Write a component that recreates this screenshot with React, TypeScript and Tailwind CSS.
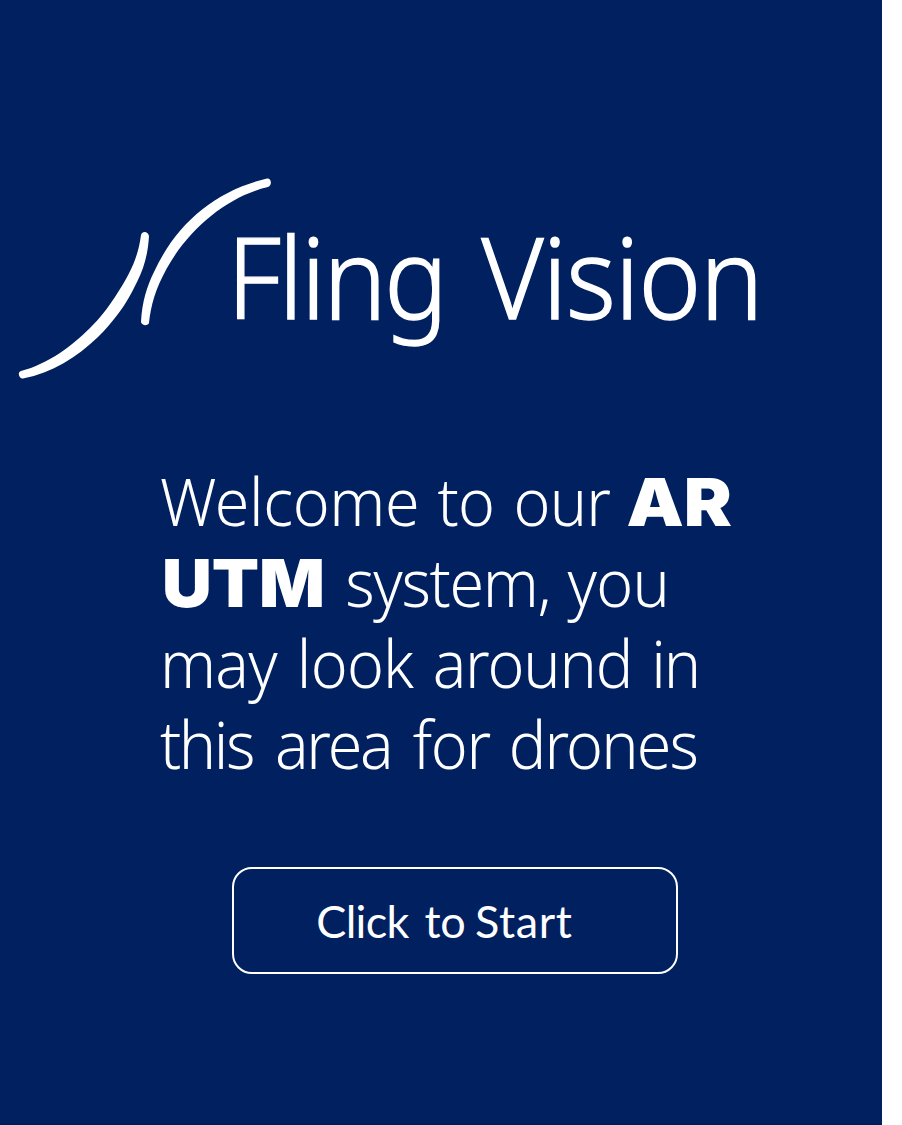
export default function App() {
  return (
    <div className="flex h-[1125px] w-[882px] flex-col border-b-2 border-[#001c5a] bg-[#002060] font-['Noto_Sans',sans-serif] text-white">
      <header className="flex h-[460px] items-start pl-[18px] pt-[176px]">
        <svg className="h-[206px] w-[256px] shrink-0" viewBox="18 176 256 206" fill="white">
          <path d="M141 235C142 231 148 231 149 236C148 254 144 268 137 282C131 294 127 302 118 314C112 322 106 329 98 337C77 357 52 373 23 378.500C19 379 17 372 21 371C48 364 72 346 90 328C100 318 107 309 115 297C130 274 138 258 141 235Z" />
          <path d="M267 178.500C272 178 272 186 268 187C229 196 190 227 167 268C155 290 151 305 149 323C148 326 142 326 141 322C142 302 147 286 154 272C177 222 217 190 267 178.500Z" />
        </svg>
        <h1 className="-ml-[47px] flex origin-left scale-x-[0.95] whitespace-nowrap pt-[20px] text-[112px] font-light leading-[160px] [-webkit-text-stroke:1.4px_white]">
          <span className="w-[268px] tracking-[-2.5px]">Fling</span>
          <span className="tracking-[-1.2px]">Vision</span>
        </h1>
      </header>
      <div className="ml-[160px] w-[640px] origin-left scale-x-[0.95] whitespace-nowrap text-[66px] font-light leading-[81px] tracking-[-0.8px]">
        <p className="flex h-[81px] items-baseline">
          <span className="w-[292px] tracking-[-0.4px]">Welcome</span>
          <span className="w-[80px]">to</span>
          <span className="w-[119px]">our</span>
          <b className="origin-left scale-x-[1.15] font-['Inter',sans-serif] font-black tracking-normal">AR</b>
        </p>
        <p className="flex h-[81px] items-baseline">
          <b className="ml-[2px] w-[193px] origin-left scale-x-[1.1] font-['Inter',sans-serif] font-black tracking-normal">UTM</b>
          <span className="w-[234px] tracking-[-1.4px]">system,</span>
          <span>you</span>
        </p>
        <p className="flex h-[81px] items-baseline">
          <span className="w-[144px]">may</span>
          <span className="w-[143px]">look</span>
          <span className="w-[230px] tracking-[-1.2px]">around</span>
          <span className="tracking-[-2px]">in</span>
        </p>
        <p className="flex h-[81px] items-baseline">
          <span className="w-[121px] tracking-[-2.6px]">this</span>
          <span className="w-[145px] tracking-[-2.3px]">area</span>
          <span className="w-[101px] tracking-[-1.4px]">for</span>
          <span className="tracking-[-1.9px]">drones</span>
        </p>
      </div>
      <button className="ml-[232px] mt-[83px] flex h-[107px] w-[446px] items-center rounded-[20px] border-2 border-white pl-[76px] pt-[3px] font-['Lato',sans-serif] text-[45px]">
        <span className="w-[105px] tracking-[-0.7px]">Click</span>
        <span className="w-[60px] tracking-[-0.2px]">to</span>
        <span className="tracking-[0.6px]">Start</span>
      </button>
    </div>
  );
}
